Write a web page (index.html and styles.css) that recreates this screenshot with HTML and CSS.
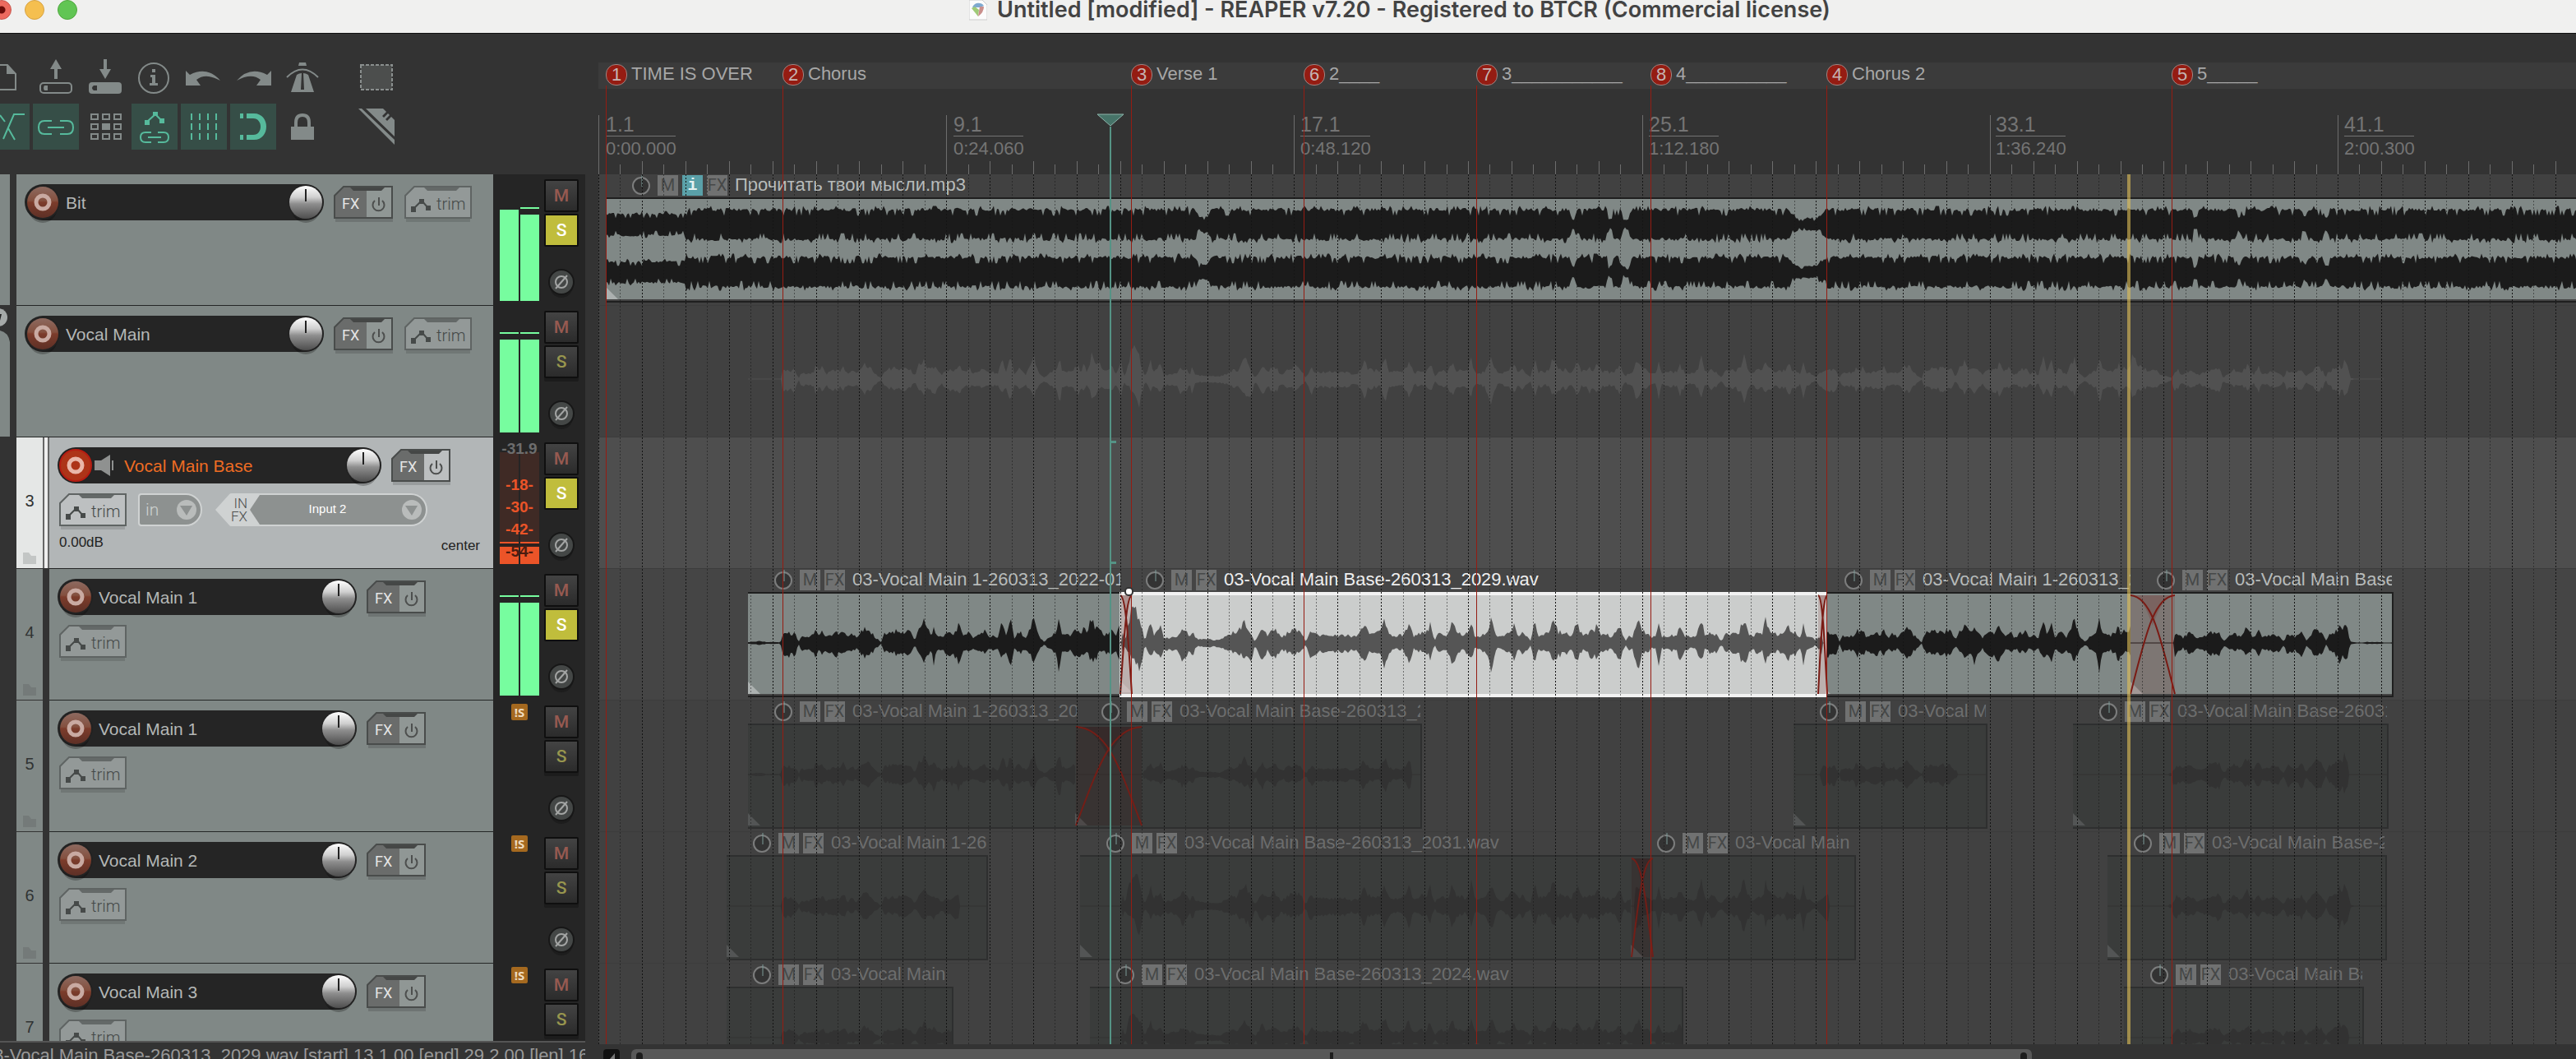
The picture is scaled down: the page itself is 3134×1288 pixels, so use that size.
FILE: index.html
```html
<!DOCTYPE html>
<html lang="en">
<head>
<meta charset="utf-8">
<title>Untitled [modified] - REAPER</title>
<link rel="stylesheet" href="styles.css">
</head>
<body>
<svg class="defs" aria-hidden="true">
  <defs>
    <linearGradient id="g-knob" x1="0" y1="0" x2="0" y2="1"><stop offset="0" stop-color="#fff"/><stop offset=".35" stop-color="#cfcfcf"/><stop offset=".55" stop-color="#8e8e8e"/><stop offset="1" stop-color="#4e4e4e"/></linearGradient>
    <linearGradient id="g-rec" x1="0" y1="0" x2="0" y2="1"><stop offset="0" stop-color="#8d6a60"/><stop offset=".45" stop-color="#84503f"/><stop offset=".5" stop-color="#7c3c2b"/><stop offset="1" stop-color="#5d3026"/></linearGradient>
    <symbol id="rec" viewBox="0 0 44 48"><ellipse cx="22" cy="28" rx="18" ry="19" fill="#000" opacity=".25"/><circle cx="22" cy="22" r="21" fill="#222"/><circle cx="22" cy="22" r="19" fill="url(#g-rec)"/><circle cx="22" cy="22" r="8" fill="none" stroke="#c9aaa2" stroke-width="5"/></symbol>
    <symbol id="rec-on" viewBox="0 0 44 48"><circle cx="22" cy="22" r="21" fill="#222"/><circle cx="22" cy="22" r="19" fill="#ad3418" stroke="#b51c12" stroke-width="2"/><circle cx="22" cy="22" r="8" fill="none" stroke="#e9b7a9" stroke-width="5"/></symbol>
    <symbol id="knob" viewBox="0 0 44 48"><ellipse cx="22" cy="28" rx="18" ry="19" fill="#000" opacity=".25"/><circle cx="22" cy="22" r="21.500" fill="#222"/><circle cx="22" cy="22" r="20" fill="url(#g-knob)"/><path d="M22 6v15" stroke="#222" stroke-width="2"/></symbol>
    <symbol id="fx-bg" viewBox="0 0 72 44"><path d="M2 40h70v4H2z" fill="#000" opacity=".14"/><path d="M12 1h59v38H1V12z" fill="#fff" opacity=".13"/><path d="M12 1h28v38H1V12z" fill="#6a6c6b"/><path d="M12 1h59v38H1V12z" fill="none" stroke="#494c4b" stroke-width="2"/><path d="M20 2h42l-4 4H24z" fill="#454746"/><path d="M50 18a7 7 0 1 0 9 0M55 14v10" fill="none" stroke="#4d4f4e" stroke-width="2"/></symbol>
    <symbol id="trim-bg" viewBox="0 0 82 44"><path d="M2 40h78v4H2z" fill="#000" opacity=".12"/><path d="M12 1h69v38H1V12z" fill="#fff" fill-opacity=".15" stroke="#5f6463" stroke-width="2"/><path d="M24 2h43l-4 4H28z" fill="#646968"/><path d="M11 28l10-10 8 9" fill="none" stroke="#464a49" stroke-width="2"/><path d="M8 25h6v7H8zM18 16h6v6h-6zM26 24h6v6h-6z" fill="#464a49"/></symbol>
    <symbol id="phase" viewBox="0 0 32 38"><circle cx="16" cy="21" r="14" fill="#1d1d1d"/><circle cx="16" cy="16" r="15" fill="#444746" stroke="#171717" stroke-width="2"/><circle cx="16" cy="16" r="7" fill="none" stroke="#a3a5a4" stroke-width="2"/><path d="M9 24L23 8" stroke="#a3a5a4" stroke-width="2"/></symbol>
    <symbol id="folder" viewBox="0 0 16 14"><path d="M0 0h7l3 4h6v10H0z"/></symbol>
    <symbol id="dial" viewBox="0 0 24 26"><circle cx="12" cy="13" r="10" fill="#333" stroke="currentColor" stroke-width="2"/><path d="M13 0v14" stroke="#7d9b98" stroke-width="1"/></symbol>
    <symbol id="drop" viewBox="0 0 24 24"><circle cx="12" cy="12" r="12" fill="#b9bcbb"/><path d="M4 7h15l-7 12z" fill="#8d9190"/></symbol>
  </defs>
</svg>

<div class="window">
  <header class="titlebar">
    <div class="lights"><button class="light red" aria-label="Close"></button><button class="light yellow" aria-label="Minimise"></button><button class="light green" aria-label="Zoom"></button></div>
    <svg class="docicon" viewBox="0 0 22 26"><path d="M0 0h16l6 6v18H0z" fill="#fcfcfc" stroke="#ccc"/><path d="M4 9a8 8 0 0 1 14-2l-5 2z" fill="#7fa9cf"/><path d="M3 10l8 10 1-8-5-4z" fill="#9fca78"/><path d="M13 8l5 0q0 7-7 12z" fill="#c98f8c"/></svg>
    <h1 class="title">Untitled [modified] - REAPER v7.20 - Registered to BTCR (Commercial license)</h1>
  </header>

  <main class="main">
    <section class="side">
      <nav class="toolbar" aria-label="Main toolbar">
        <div class="tools">
          <button class="tool" aria-label="New project"><svg viewBox="0 0 56 56"><path d="M6 13h23l10 11v19H6z" class="ln"/><path d="M28 12v12h12z"/></svg></button>
          <button class="tool" aria-label="Open project"><svg viewBox="0 0 56 56"><path d="M28 6l7 12h-5v12h-4V18h-5z"/><rect x="9" y="35" width="38" height="12" rx="4" class="ln"/><path d="M14 38h4v6h-4q-2-3 0-6z"/></svg></button>
          <button class="tool" aria-label="Save project"><svg viewBox="0 0 56 56"><path d="M26 6h4v12h5l-7 12-7-12h5z"/><path fill-rule="evenodd" d="M12 34h32q4 0 4 4v6q0 4-4 4H12q-4 0-4-4v-6q0-4 4-4zm2 4q-4 3 0 6h4v-6z"/></svg></button>
          <button class="tool" aria-label="Project settings"><svg viewBox="0 0 56 56"><circle cx="27" cy="29" r="18" class="ln"/><path d="M25 18h4v4h-4zM23 25h6v10h3v3H22v-3h3v-7h-2z"/></svg></button>
          <button class="tool" aria-label="Undo"><svg viewBox="0 0 56 56"><path d="M6 20l5 5Q32 14 48 32 30 22 19 31l5 7H6z"/></svg></button>
          <button class="tool" aria-label="Redo"><svg viewBox="0 0 56 56"><path d="M50 20l-5 5Q24 14 8 32q18-10 29-1l-5 7h18z"/></svg></button>
          <button class="tool" aria-label="Metronome"><svg viewBox="0 0 56 56"><path d="M24 10h8l1 4H23zM21 25q3-2 6-2l-1 20h4l-1-20q3 0 6 2l7 21H14z"/><path d="M9 28q19-19 38 0" class="ln"/></svg></button>
          <button class="tool spaced" aria-label="Marquee selection"><svg viewBox="0 0 56 56"><path d="M9 13h38v30H9z" fill="#4c4e4d" stroke="#8a8f8e" stroke-width="2" stroke-dasharray="4 2"/></svg></button>
        </div>
        <div class="tools">
          <button class="tool on" aria-label="Auto-crossfade"><svg viewBox="0 0 56 56"><path d="M24 43l13-30h13M20 14l6 8M30 30l8 14" class="ln"/></svg></button>
          <button class="tool on" aria-label="Item grouping"><svg viewBox="0 0 56 56"><path d="M23 21H14q-7 0-7 8t7 8h9M33 21h9q7 0 7 8t-7 8h-9M18 29h20" class="ln"/></svg></button>
          <button class="tool" aria-label="Ripple editing"><svg viewBox="0 0 56 56"><path d="M11 13h8v6h-8zM25 13h8v6h-8zM39 13h8v6h-8zM11 25h8v6h-8zM39 25h8v6h-8zM11 37h8v6h-8zM25 37h8v6h-8zM39 37h8v6h-8z" class="ln"/><path d="M24 24h10v8H24z"/></svg></button>
          <button class="tool on" aria-label="Envelope grouping"><svg viewBox="0 0 56 56"><path d="M16 20h6v6h-6zM26 10h6v5h-6zM34 18h6v6h-6z"/><path d="M19 22l10-9 8 8M24 35h-7q-6 0-6 6t6 6h7M32 35h7q6 0 6 6t-6 6h-7M20 41h16" class="ln"/></svg></button>
          <button class="tool on" aria-label="Grid"><svg viewBox="0 0 56 56"><path d="M13 12v32M23 12v32M33 12v32M43 12v32" stroke-dasharray="8 4" class="ln"/></svg></button>
          <button class="tool on" aria-label="Snap"><svg viewBox="0 0 56 56"><path d="M12 12h4v6h-4zM12 38h4v6h-4zM20 12h9c20 0 20 32 0 32h-9v-6h8c12 0 12-20 0-20h-8z"/></svg></button>
          <button class="tool" aria-label="Lock"><svg viewBox="0 0 56 56"><path d="M14 28h28v16H14z"/><path d="M20 30v-7q0-9 8-9t8 9v7" fill="none" stroke="currentColor" stroke-width="4"/></svg></button>
          <button class="tool spaced" aria-label="Razor edit"><svg viewBox="0 0 56 56"><path d="M6 6h4l40 38v6zM15 6h21l4 4-5 5 2 2 5-5 2 2-5 5 2 2 5-5 4 4v20z"/></svg></button>
        </div>
      </nav>

      <div class="tracks">
        <article class="track">
          <div class="indent body"></div>
          <div class="panel wide">
            <div class="row"><div class="namebar"><button class="round" aria-label="Record arm"><svg><use href="#rec"/></svg></button><span class="name">Bit</span><button class="round" aria-label="Volume"><svg><use href="#knob"/></svg></button></div>
            <button class="fx"><svg><use href="#fx-bg"/></svg><span>FX</span></button><button class="trim"><svg><use href="#trim-bg"/></svg><span>trim</span></button></div>
          </div>
          <div class="strip"><div class="meters"><i class="m1"></i><i class="m2 peak"></i></div>
            <div class="ms"><button class="mute">M</button><button class="solo lit">S</button><button class="phase" aria-label="Phase"><svg><use href="#phase"/></svg></button></div></div>
        </article>
        <article class="track">
          <div class="indent body parent"><svg viewBox="0 0 12 159"><path d="M0 0h12v159H0z" fill="#333"/><path d="M0 30q10 2 12 14v115H0z" fill="#808886"/><circle cx="-2" cy="14" r="11" fill="#a5a9a8"/><path d="M0 10h2l-2 8z" fill="#222"/></svg></div>
          <div class="panel wide">
            <div class="row"><div class="namebar"><button class="round" aria-label="Record arm"><svg><use href="#rec"/></svg></button><span class="name">Vocal Main</span><button class="round" aria-label="Volume"><svg><use href="#knob"/></svg></button></div>
            <button class="fx"><svg><use href="#fx-bg"/></svg><span>FX</span></button><button class="trim"><svg><use href="#trim-bg"/></svg><span>trim</span></button></div>
          </div>
          <div class="strip"><div class="meters"><i class="m3 peak"></i><i class="m3 peak"></i></div>
            <div class="ms"><button class="mute">M</button><button class="solo">S</button><button class="phase" aria-label="Phase"><svg><use href="#phase"/></svg></button></div></div>
        </article>
        <article class="track selected">
          <div class="indent"></div>
          <div class="num"><span>3</span><svg><use href="#folder"/></svg></div>
          <div class="panel">
            <div class="row"><div class="namebar long"><button class="round" aria-label="Record arm"><svg><use href="#rec-on"/></svg></button><svg class="speaker" viewBox="0 0 24 26"><path d="M0 7h8l11-7v26L8 19H0z" fill="#8f9190"/><path d="M22 7v12" stroke="#8f9190" stroke-width="2"/></svg><span class="name">Vocal Main Base</span><button class="round" aria-label="Volume"><svg><use href="#knob"/></svg></button></div>
            <button class="fx"><svg><use href="#fx-bg"/></svg><span>FX</span></button></div>
            <div class="row second"><button class="trim"><svg><use href="#trim-bg"/></svg><span>trim</span></button>
              <button class="inmode"><span>in</span><svg><use href="#drop"/></svg></button>
              <div class="input"><button class="infx">IN<br>FX</button><button class="source"><span>Input 2</span><svg><use href="#drop"/></svg></button></div></div>
            <div class="row values"><span>0.00dB</span><span class="pan">center</span></div>
          </div>
          <div class="strip"><div class="meters armed"><i></i><i></i><div class="scale"><b class="max">-31.9</b><b>-18-</b><b>-30-</b><b>-42-</b><b class="low">-54-</b></div></div>
            <div class="ms"><button class="mute">M</button><button class="solo lit">S</button><button class="phase" aria-label="Phase"><svg><use href="#phase"/></svg></button></div></div>
        </article>
        <article class="track">
          <div class="indent"></div>
          <div class="num"><span>4</span><svg><use href="#folder"/></svg></div>
          <div class="panel">
            <div class="row"><div class="namebar"><button class="round" aria-label="Record arm"><svg><use href="#rec"/></svg></button><span class="name">Vocal Main 1</span><button class="round" aria-label="Volume"><svg><use href="#knob"/></svg></button></div>
            <button class="fx"><svg><use href="#fx-bg"/></svg><span>FX</span></button></div>
            <div class="row second"><button class="trim"><svg><use href="#trim-bg"/></svg><span>trim</span></button></div>
          </div>
          <div class="strip"><div class="meters"><i class="m3 peak"></i><i class="m3 peak"></i></div>
            <div class="ms"><button class="mute">M</button><button class="solo lit">S</button><button class="phase" aria-label="Phase"><svg><use href="#phase"/></svg></button></div></div>
        </article>
        <article class="track">
          <div class="indent"></div>
          <div class="num"><span>5</span><svg><use href="#folder"/></svg></div>
          <div class="panel">
            <div class="row"><div class="namebar"><button class="round" aria-label="Record arm"><svg><use href="#rec"/></svg></button><span class="name">Vocal Main 1</span><button class="round" aria-label="Volume"><svg><use href="#knob"/></svg></button></div>
            <button class="fx"><svg><use href="#fx-bg"/></svg><span>FX</span></button></div>
            <div class="row second"><button class="trim"><svg><use href="#trim-bg"/></svg><span>trim</span></button></div>
          </div>
          <div class="strip"><div class="meters"><b class="notsolo">!S</b></div>
            <div class="ms"><button class="mute">M</button><button class="solo">S</button><button class="phase" aria-label="Phase"><svg><use href="#phase"/></svg></button></div></div>
        </article>
        <article class="track">
          <div class="indent"></div>
          <div class="num"><span>6</span><svg><use href="#folder"/></svg></div>
          <div class="panel">
            <div class="row"><div class="namebar"><button class="round" aria-label="Record arm"><svg><use href="#rec"/></svg></button><span class="name">Vocal Main 2</span><button class="round" aria-label="Volume"><svg><use href="#knob"/></svg></button></div>
            <button class="fx"><svg><use href="#fx-bg"/></svg><span>FX</span></button></div>
            <div class="row second"><button class="trim"><svg><use href="#trim-bg"/></svg><span>trim</span></button></div>
          </div>
          <div class="strip"><div class="meters"><b class="notsolo">!S</b></div>
            <div class="ms"><button class="mute">M</button><button class="solo">S</button><button class="phase" aria-label="Phase"><svg><use href="#phase"/></svg></button></div></div>
        </article>
        <article class="track">
          <div class="indent"></div>
          <div class="num"><span>7</span><svg><use href="#folder"/></svg></div>
          <div class="panel">
            <div class="row"><div class="namebar"><button class="round" aria-label="Record arm"><svg><use href="#rec"/></svg></button><span class="name">Vocal Main 3</span><button class="round" aria-label="Volume"><svg><use href="#knob"/></svg></button></div>
            <button class="fx"><svg><use href="#fx-bg"/></svg><span>FX</span></button></div>
            <div class="row second"><button class="trim"><svg><use href="#trim-bg"/></svg><span>trim</span></button></div>
          </div>
          <div class="strip"><div class="meters"><b class="notsolo">!S</b></div>
            <div class="ms"><button class="mute">M</button><button class="solo">S</button><button class="phase" aria-label="Phase"><svg><use href="#phase"/></svg></button></div></div>
        </article>
      </div>
      <footer class="status"><span>03-Vocal Main Base-260313_2029.wav [start] 13.1.00 [end] 29.2.00 [len] 16</span></footer>
    </section>

    <section class="arrange">
      <div class="ruler">
        <svg class="ticks" id="ticks"></svg>
        <div class="time" style="left:9px"><span>1.1</span><span>0:00.000</span></div>
        <div class="time" style="left:432px"><span>9.1</span><span>0:24.060</span></div>
        <div class="time" style="left:854px"><span>17.1</span><span>0:48.120</span></div>
        <div class="time" style="left:1278px"><span>25.1</span><span>1:12.180</span></div>
        <div class="time" style="left:1700px"><span>33.1</span><span>1:36.240</span></div>
        <div class="time" style="left:2124px"><span>41.1</span><span>2:00.300</span></div>
      </div>
      <div class="lanes">
        <div class="lane">
          <article class="item" style="left:9px;right:-40px"><header><svg class="dial"><use href="#dial"/></svg><button>M</button><button class="info">i</button><button>FX</button><span>Прочитать твои мысли.mp3</span></header><div class="clip"><svg class="wave" data-kind="music"></svg></div></article>
        </div>
        <div class="lane"><svg class="wave ghost" data-voice="952-2862" data-scale=".9"></svg></div>
        <div class="lane sel"></div>
        <div class="lane live">
          <article class="item" style="left:182px;width:467px"><header style="width:453px"><svg class="dial"><use href="#dial"/></svg><button>M</button><button>FX</button><span>03-Vocal Main 1-260313_2022-01</span></header><div class="clip"><svg class="wave" data-voice="910-1377"></svg></div></article>
          <article class="item current" style="left:634px;width:861px"><header><svg class="dial"><use href="#dial"/></svg><button>M</button><button>FX</button><span>03-Vocal Main Base-260313_2029.wav</span></header><div class="clip"><svg class="wave" data-voice="1366-2216"></svg></div></article>
          <article class="item" style="left:1484px;width:434px"><header style="width:380px"><svg class="dial"><use href="#dial"/></svg><button>M</button><button>FX</button><span>03-Vocal Main 1-260313_2</span></header><div class="clip"><svg class="wave" data-voice="2214-2646"></svg></div></article>
          <article class="item" style="left:1864px;width:320px"><header style="width:318px"><svg class="dial"><use href="#dial"/></svg><button>M</button><button>FX</button><span>03-Vocal Main Base</span></header><div class="clip"><svg class="wave" data-voice="2646-2912"></svg></div></article>
          <svg class="fade" style="left:635px;width:14px" viewBox="0 0 54 120" preserveAspectRatio="none"><use href="#xfade"/></svg>
          <svg class="fade" style="left:1484px;width:11px" viewBox="0 0 54 120" preserveAspectRatio="none"><use href="#xfade"/></svg>
          <svg class="fade" style="left:1864px;width:54px" viewBox="0 0 54 120" preserveAspectRatio="none"><g id="xfade"><path d="M0 0h54v120H0z" fill="currentColor" fill-opacity=".16"/><path d="M0 0h54C40 2 34 18 27 37 20 18 14 2 0 0z" fill="currentColor" fill-opacity=".2"/><path d="M0 0C26 2 36 50 54 120M54 0C28 2 18 50 0 120" fill="none" vector-effect="non-scaling-stroke"/></g></svg>
        </div>
        <div class="lane">
          <article class="item muted" style="left:182px;width:479px"><header style="width:400px"><svg class="dial"><use href="#dial"/></svg><button>M</button><button>FX</button><span>03-Vocal Main 1-260313_20</span></header><div class="clip"><svg class="wave" data-voice="910-1389" data-scale=".8"></svg></div></article>
          <article class="item muted" style="left:580px;width:422px"><header style="width:420px"><svg class="dial"><use href="#dial"/></svg><button>M</button><button>FX</button><span>03-Vocal Main Base-260313_2</span></header><div class="clip"><svg class="wave" data-voice="1392-1716" data-scale=".7"></svg></div></article>
          <article class="item muted" style="left:1454px;width:236px"><header style="width:234px"><svg class="dial"><use href="#dial"/></svg><button>M</button><button>FX</button><span>03-Vocal M</span></header><div class="clip"><svg class="wave" data-voice="2216-2380" data-scale=".8"></svg></div></article>
          <article class="item muted" style="left:1794px;width:384px"><header style="width:382px"><svg class="dial"><use href="#dial"/></svg><button>M</button><button>FX</button><span>03-Vocal Main Base-26031</span></header><div class="clip"><svg class="wave" data-voice="2640-2856"></svg></div></article>
          <svg class="fade dim" style="left:581px;width:80px" viewBox="0 0 54 120" preserveAspectRatio="none"><use href="#xfade"/></svg>
        </div>
        <div class="lane">
          <article class="item muted" style="left:156px;width:318px"><header style="width:316px"><svg class="dial"><use href="#dial"/></svg><button>M</button><button>FX</button><span>03-Vocal Main 1-26</span></header><div class="clip"><svg class="wave" data-voice="952-1166" data-scale=".8"></svg></div></article>
          <article class="item muted" style="left:586px;width:697px"><header style="width:660px"><svg class="dial"><use href="#dial"/></svg><button>M</button><button>FX</button><span>03-Vocal Main Base-260313_2031.wav</span></header><div class="clip"><svg class="wave" data-voice="1366-2011"></svg></div></article>
          <article class="item muted" style="left:1256px;width:274px"><header style="width:271px"><svg class="dial"><use href="#dial"/></svg><button>M</button><button>FX</button><span>03-Vocal Main</span></header><div class="clip"><svg class="wave" data-voice="1990-2224"></svg></div></article>
          <article class="item muted" style="left:1836px;width:340px"><header style="width:337px"><svg class="dial"><use href="#dial"/></svg><button>M</button><button>FX</button><span>03-Vocal Main Base-2</span></header><div class="clip"><svg class="wave" data-voice="2640-2862"></svg></div></article>
          <svg class="fade dim" style="left:1257px;width:26px" viewBox="0 0 54 120" preserveAspectRatio="none"><use href="#xfade"/></svg>
        </div>
        <div class="lane">
          <article class="item muted" style="left:156px;width:276px"><header style="width:272px"><svg class="dial"><use href="#dial"/></svg><button>M</button><button>FX</button><span>03-Vocal Main</span></header><div class="clip"><svg class="wave" data-voice="952-1160" data-scale=".7"></svg></div></article>
          <article class="item muted" style="left:598px;width:722px"><header><svg class="dial"><use href="#dial"/></svg><button>M</button><button>FX</button><span>03-Vocal Main Base-260313_2024.wav</span></header><div class="clip"><svg class="wave" data-voice="1366-2048" data-scale=".8"></svg></div></article>
          <article class="item muted" style="left:1856px;width:292px"><header style="width:290px"><svg class="dial"><use href="#dial"/></svg><button>M</button><button>FX</button><span>03-Vocal Main Ba</span></header><div class="clip"><svg class="wave" data-voice="2642-2856" data-scale=".8"></svg></div></article>
        </div>
        <svg class="grid" id="grid"></svg>
      </div>
      <div class="hscroll"><svg class="arrow" viewBox="0 0 20 12"><path d="M0 12V4q0-4 4-4h12q4 0 4 4v8z" fill="#111"/><path d="M14 5v7H8z" fill="#777"/></svg><div class="thumb"><i></i><i class="mid"></i><i></i></div></div>

      <div class="markers">
        <a href="#" class="marker" style="left:9px"><b>1</b><span>TIME IS OVER</span></a>
        <a href="#" class="marker" style="left:224px"><b>2</b><span>Chorus</span></a>
        <a href="#" class="marker" style="left:648px"><b>3</b><span>Verse 1</span></a>
        <a href="#" class="marker" style="left:858px"><b>6</b><span>2____</span></a>
        <a href="#" class="marker" style="left:1068px"><b>7</b><span>3___________</span></a>
        <a href="#" class="marker" style="left:1280px"><b>8</b><span>4__________</span></a>
        <a href="#" class="marker" style="left:1494px"><b>4</b><span>Chorus 2</span></a>
        <a href="#" class="marker" style="left:1914px"><b>5</b><span>5_____</span></a>
        <div class="playcursor"><svg viewBox="0 0 34 16"><path d="M1 1h32L17 15z" fill="#467368" stroke="#8db5ab"/></svg></div>
        <div class="bracket"></div>
        <div class="editcursor"></div>
        <div class="handle"></div>
      </div>
    </section>
  </main>
</div>
<script src="waves.js"></script>
</body>
</html>
```
FILE: styles.css
```css
* { box-sizing: border-box; }
body { margin: 0; background: #333; font-family: "Liberation Sans", Arial, sans-serif; overflow: hidden; }
button { appearance: none; border: 0; padding: 0; margin: 0; background: none; font: inherit; color: inherit; }
svg { display: block; }
.defs { position: absolute; width: 0; height: 0; }

.window { display: flex; flex-direction: column; height: 100vh; }
.titlebar { display: flex; justify-content: center; align-items: flex-start; gap: 12px; height: 41px; background: #f0f0ef; border-bottom: 1px solid #111; position: relative; overflow: hidden; flex: none; }
.lights { position: absolute; left: -10px; top: 0; display: flex; gap: 16px; }
.light { width: 24px; height: 24px; border-radius: 50%; border: 1px solid; }
.light.red { background: radial-gradient(circle, #6b0d0a 4px, #ed6a5f 5px); border-color: #c9534a; }
.light.yellow { background: #f5bf4f; border-color: #d6a243; }
.light.green { background: #61c554; border-color: #50a73f; }
.docicon { width: 22px; height: 26px; margin-left: 272px; }
.title { margin: 0; font: 600 27px/24px Inter, sans-serif; color: #434343; white-space: nowrap; height: 32px; }

.main { display: flex; flex: 1; min-height: 0; }
.side { width: 728px; flex: none; display: flex; flex-direction: column; overflow: hidden; }
.toolbar { height: 171px; flex: none; padding-top: 25px; display: flex; flex-direction: column; gap: 4px; }
.tools { display: flex; gap: 4px; margin-left: -20px; }
.tool { width: 56px; height: 56px; color: #838a89; flex: none; }
.tool.on { background: #364e47; color: #56ba9c; }
.tool.spaced { margin-left: 30px; }
.tool svg { width: 56px; height: 56px; fill: currentColor; }
.tool .ln { fill: none; stroke: currentColor; stroke-width: 2; }

.tracks { flex: 1; min-height: 0; overflow: hidden; display: flex; flex-direction: column; }
.track { height: 160px; flex: none; display: flex; padding-right: 16px; }
.indent { width: 12px; height: 159px; margin-right: 8px; }
.indent.body { background: #808886; }
.indent svg { width: 12px; height: 159px; }
.num { width: 32px; height: 159px; margin-right: 8px; background: #808886; color: #303333; font-size: 20px; display: flex; flex-direction: column; justify-content: flex-end; align-items: center; padding-bottom: 5px; gap: 51px; }
.num svg { width: 16px; height: 14px; fill: #747a79; }
.panel { flex: 1; height: 160px; background: #808886; border-bottom: 1px solid #242626; padding: 12px 10px 0; }
.selected .num { background: #e5e7e6; box-shadow: 2px 0 #666, 6px 0 #eee, 8px 0 #666; }
.selected .num svg { fill: #c3c6c5; }
.selected .panel { background: #b2b6b7; }
.row { display: flex; height: 44px; }
.row.second { margin-left: 2px; margin-top: 12px; }
.namebar { width: 364px; height: 44px; border-radius: 22px; background: #252525; display: flex; align-items: flex-start; margin-right: 12px; }
.namebar.long { width: 394px; }
.round, .round svg { width: 44px; height: 48px; flex: none; }
.name { flex: 1; font-size: 21px; line-height: 45px; color: #b4b7b6; padding-left: 6px; white-space: nowrap; }
.selected .name { color: #ee6c23; padding-left: 12px; }
.speaker { width: 24px; height: 26px; margin-top: 9px; margin-left: 1px; }
.fx, .trim { position: relative; height: 44px; margin-top: 2px; text-align: left; flex: none; }
.fx { width: 72px; margin-right: 14px; }
.trim { width: 82px; }
.second .trim { margin-top: 0; }
.fx svg, .trim svg { position: absolute; inset: 0; width: 100%; height: 44px; }
.fx span, .trim span { position: relative; display: block; line-height: 40px; height: 44px; padding-top: 2px; }
.fx span { font-family: Roboto, sans-serif; font-size: 18px; color: #e4e4e4; padding-left: 10px; }
.trim span { font-family: Roboto, sans-serif; font-weight: 300; font-size: 20px; color: #454948; padding-left: 39px; }
.inmode { width: 78px; height: 40px; margin-left: 14px; border: 2px solid #cfd2d2; border-radius: 4px 20px 20px 4px; background: #8d9190; display: flex; align-items: center; justify-content: space-between; padding: 0 5px 0 7px; font: 300 21px Roboto, sans-serif; color: #cdd1d1; }
.inmode svg, .source svg { width: 24px; height: 24px; }
.input { display: flex; width: 258px; height: 40px; margin-left: 16px; border-radius: 20px; background: #cfd2d2; clip-path: polygon(0 50%, 7% 0, 100% 0, 100% 100%, 7% 100%); }
.infx { width: 44px; font: 300 17px/16px Roboto, sans-serif; color: #4d4f4f; text-align: right; padding-right: 5px; }
.source { flex: 1; height: 36px; margin: 2px 2px 2px -2px; border-radius: 0 18px 18px 0; background: #8d9190; clip-path: polygon(0 50%, 12px 0, 100% 0, 100% 100%, 12px 100%); display: flex; align-items: center; justify-content: flex-end; padding-right: 5px; color: #fff; font-size: 15px; }
.source span { flex: 1; text-align: center; padding-left: 4px; padding-bottom: 3px; }
.values { margin-top: 2px; margin-left: 2px; padding-right: 6px; height: 32px; justify-content: space-between; font-size: 17px; line-height: 27px; color: #222; }
.values .pan { padding-top: 4px; }

.strip { width: 112px; height: 160px; background: #252525; display: flex; padding: 6px 8px 0; }
.meters { width: 48px; height: 148px; margin-right: 6px; display: flex; gap: 2px; align-items: flex-end; justify-content: center; position: relative; }
.meters i { flex: 1; background: #77fd9f; position: relative; }
.meters .m1 { height: 111px; }
.meters .m2 { height: 105px; }
.meters .m3 { height: 113px; }
.meters .peak::before { content: ""; position: absolute; left: 0; right: 0; top: -9px; height: 2px; background: #77fd9f; }
.meters.armed i { height: 136px; background: linear-gradient(#3f2a25 109px, #eb5428 109px, #eb5428 111px, #2c211f 111px, #2c211f 115px, #eb5428 115px); }
.scale { position: absolute; inset: -2px -4px 0; display: flex; flex-direction: column; text-align: center; font-size: 19px; line-height: 20px; color: #eb5428; gap: 7px; }
.scale .max { color: #6d6d6d; margin-bottom: 17px; }
.scale .low { color: #4c1c10; }
.notsolo { align-self: flex-start; margin-top: -2px; width: 20px; height: 20px; background: #a5691f; border-radius: 2px; font: 700 15px/20px "Open Sans", sans-serif; color: #efdcc0; text-align: center; }
.ms { width: 42px; display: flex; flex-direction: column; align-items: center; gap: 2px; font-family: Roboto, sans-serif; font-size: 21px; }
.mute, .solo { width: 42px; height: 40px; border: 2px solid #0f0f0f; background: linear-gradient(#434343, #2b2b2b); border-radius: 2px; flex: none; }
.mute { color: #975a51; font-weight: 500; }
.solo { color: #98964e; font-weight: 500; box-shadow: 0 4px #1c1c1c; }
.solo.lit { background: #c0bd3c; color: #fff; box-shadow: none; }
.phase { margin-top: 25px; }
.phase svg { width: 32px; height: 38px; }
.status { height: 22px; flex: none; border-top: 2px solid #555; color: #999; font-size: 22px; line-height: 32px; white-space: nowrap; overflow: hidden; margin-right: 16px; }
.status span { margin-left: -20px; }

.arrange { flex: 1; min-width: 0; position: relative; display: flex; flex-direction: column; overflow: hidden; }
.ruler { height: 171px; flex: none; position: relative; background: linear-gradient(#333 35px, #3b3b3b 35px, #3b3b3b 67px, #333 67px); }
.ticks { position: absolute; left: 0; bottom: 0; width: 100%; height: 72px; }
.ticks path { stroke: #6d6d6d; fill: none; }
.time { position: absolute; top: 97px; color: #747474; display: flex; flex-direction: column; width: 85px; white-space: nowrap; }
.time span:first-child { font-size: 25px; line-height: 27px; border-bottom: 1px solid #747474; }
.time span:last-child { font-size: 22px; line-height: 30px; }
.lanes { flex: 1; min-height: 0; position: relative; overflow: hidden; background: #404040; }
.lane { height: 160px; position: relative; border-bottom: 1px solid #3c3c3c; background: #414141; }
.lane.sel { background: #4e4e4e; }
.lane.live { background: #454545; }
.item { position: absolute; top: 0; height: 156px; }
.item.current { z-index: 1; }
.item header { height: 28px; padding: 1px 0 0 31px; display: flex; gap: 5px; overflow: hidden; white-space: nowrap; align-items: flex-start; color: #7c7d7d; position: relative; }
.dial { width: 24px; height: 26px; flex: none; margin-right: 3px; }
.item header button { width: 25px; height: 25px; flex: none; background: #707171; color: #464848; font: 20px/25px Roboto, sans-serif; text-align: center; }
.item header .info { background: #5aa0a8; color: #e4f2f2; font: 700 20px/25px "Liberation Mono", monospace; }
.item header span { font-size: 22px; line-height: 24px; color: #b7bbba; padding-left: 4px; }
.clip { position: relative; height: 128px; background: #808886; border: 2px solid #1f1f1f; border-left: 0; box-shadow: inset 0 -2px #444; overflow: hidden; }
.clip::after { content: ""; position: absolute; left: 0; bottom: 2px; width: 15px; height: 15px; background: rgba(255, 255, 255, .35); clip-path: polygon(0 0, 100% 100%, 0 100%); }
.wave { position: absolute; left: 0; top: 0; width: 100%; height: 122px; fill: #1b1b1b; }
.wave.ghost { left: 182px; top: 29px; width: 1990px; fill: #515151; }
.current .clip { background: #cbcdcc; border: 0 solid #f2f2f2; border-width: 4px 2px 4px 0; box-shadow: none; }
.current .wave { top: -2px; fill: #555; }
.current header span { color: #eee; }
.muted header span { color: #6c6d6d; }
.muted .clip { background: #3a3c3b; border-color: #2e2f2f; box-shadow: none; }
.muted .clip::after { background: #535555; }
.muted .wave { fill: #323232; }
.fade { position: absolute; top: 32px; height: 120px; overflow: visible; color: #6e1a14; stroke: none; z-index: 2; }
.fade path:last-child { stroke: #7a1b14; stroke-width: 2px; }
.fade.dim { color: #300505; opacity: .9; }
.grid { position: absolute; inset: 0; width: 100%; height: 100%; pointer-events: none; z-index: 3; }
.grid path { fill: none; stroke-dasharray: 2 2; }
.grid .bar { stroke: #141414; }
.grid .half { stroke: #141414; stroke-opacity: .5; }

.hscroll { height: 18px; flex: none; background: #333; display: flex; padding: 6px 0 0 6px; gap: 14px; }
.arrow { width: 20px; height: 12px; }
.thumb { width: 71%; height: 12px; background: #585858; border-radius: 6px 6px 0 0; display: flex; justify-content: space-between; align-items: flex-end; padding: 0 6px; }
.thumb i { width: 8px; height: 8px; background: #1d1d1d; border-radius: 4px 4px 0 0; }
.thumb .mid { width: 4px; border-radius: 0; }

.markers { position: absolute; inset: 0 0 18px; overflow: hidden; pointer-events: none; z-index: 4; }
.marker { position: absolute; top: 37px; bottom: 0; display: flex; align-items: flex-start; gap: 5px; text-decoration: none; font-size: 22px; line-height: 24px; color: #a7a7a7; white-space: nowrap; }
.marker::before { content: ""; position: absolute; left: 0; top: 26px; bottom: 0; width: 1px; background: #951c12; }
.marker b { width: 26px; height: 26px; border: 1px solid #9b8583; border-radius: 12px; background: #951c12; color: #c5b5b3; font-weight: 400; text-align: center; }
.playcursor { position: absolute; left: 606px; top: 97px; bottom: 0; width: 34px; }
.playcursor svg { width: 34px; height: 16px; }
.playcursor::after { content: ""; position: absolute; left: 16px; top: 16px; bottom: 0; width: 2px; background: #559385; }
.bracket { position: absolute; left: 622px; top: 495px; width: 8px; height: 150px; border: solid #559385; border-width: 3px 0; }
.editcursor { position: absolute; left: 1860px; top: 171px; bottom: 0; width: 4px; background: rgba(226, 194, 88, .6); }
.handle { position: absolute; left: 640px; top: 673px; width: 11px; height: 11px; border-radius: 5px; background: #fff; border: 2px solid #333; }
```
FILE: waves.js
```js
// Timeline origin in window pixels, and width of one bar
const ORIGIN = 728, BAR = 52.9;
let seed = 7;
const rnd = () => (seed = (seed * 16807) % 2147483647) / 2147483647;

// Envelope lists: x, height above, height below the centre line
const chorus = [66,3,3,90,8,8,100,6,6,110,2,2,120,4,4,143,2,2,150,38,50,178,38,50,190,5,5,195,25,30,225,28,30,232,52,58,240,35,30,248,52,50,258,22,30,285,40,50,292,30,30,302,55,50,312,20,25,322,35,30,335,22,22,355,62,60,370,45,45,382,20,22,396,3,3,404,38,35,428,45,40,452,45,50,468,45,40,481,10,10,492,65,45,497,45,40,504,97,78,510,50,40,522,40,40,528,55,78,535,40,40,548,20,22,565,38,45,580,35,50,592,70,72,600,30,35,608,35,30,617,48,35,627,20,25,657,50,40,668,20,20,678,35,35,688,15,20,702,88,60,710,30,40,722,90,85,730,20,25,740,48,40,760,20,30,768,50,40,780,95,72,790,30,30,805,5,8,820,25,25,835,40,40,843,92,112,850,40,40,870,30,30,885,50,50,890,65,72,897,30,50,905,60,40,912,35,30,925,100,72,935,55,70,942,80,40,955,30,35,965,40,45,975,55,45,985,20,25,997,80,75,1008,6,8];
const verse = [1010,15,20,1020,100,40,1032,138,60,1045,85,108,1058,8,8,1072,75,48,1080,30,30,1098,60,50,1106,15,25,1140,30,35,1152,50,68,1165,45,50,1170,15,20,1177,50,62,1185,18,15,1245,10,15,1255,18,20,1280,40,35,1290,35,35,1308,90,60,1325,30,70,1335,5,8,1352,60,75,1365,30,30,1384,55,60,1400,20,25,1432,55,45,1450,40,30,1462,5,8,1475,45,60,1490,30,35,1568,30,35];
const ending = [850,95,70,870,60,50,890,30,30,905,45,40,920,20,25,945,5,5,950,20,50,958,40,40,970,20,20,990,40,40,1000,25,30,1010,18,20,1045,45,50,1060,40,50,1068,5,10,1090,40,30,1110,25,25,1125,60,45,1140,20,20,1153,50,50,1160,20,20,1185,35,35,1200,30,40,1212,5,8,1220,35,45,1240,25,30,1256,40,50,1265,10,12,1290,55,50,1303,40,45,1313,8,5,1320,35,30,1340,45,50,1346,75,90,1350,40,40,1357,75,65,1364,50,50,1372,5,5,1385,2,2,1405,2,2,1410,4,4,1445,4,4,1448,1,1,1470,1,1];

const voice = [];
const add = (list, scale, dx, limit = 9999) => {
  for (let i = 0; i < list.length; i += 3) {
    const x = list[i] / scale + dx;
    if (x < limit) voice.push([x, list[i + 1] / 3, list[i + 2] / 3]);
  }
};
add(chorus, 2.063, 880);
add(verse, 2.063, 880);
for (let x = 1644, n = 0; x < 2212; n++) {
  const spike = n % 5 === 3, rest = n % 23 === 19;
  const up = rest ? 3 : spike ? 18 + rnd() * 14 : 7 + rnd() * 8;
  voice.push([x, up, up * (.75 + rnd() * .45)]);
  x += 3 + rnd() * 4;
}
add(chorus.slice(18), 2.063, 2146, 2592);
add(ending, 1.96, 2160);

function at(x) {
  let i = voice.findIndex(p => p[0] > x);
  if (i < 1) return [1, 1];
  const a = voice[i - 1], b = voice[i], t = (x - a[0]) / (b[0] - a[0]);
  return [a[1] + (b[1] - a[1]) * t, a[2] + (b[2] - a[2]) * t];
}

function shape(mid, x0, x1, fn) {
  let top = '', low = [];
  for (let x = x0; x <= x1; x += 2) {
    const [u, d] = fn(x);
    top += `L${x - x0} ${(mid - u).toFixed(1)}`;
    low.push(`L${x - x0} ${(mid + d).toFixed(1)}`);
  }
  return 'M' + top.slice(1) + low.reverse().join('') + 'Z';
}

const dips = [[1464, 5, 9], [1914, 2, 12], [1959, 2, 11], [1978, 3, 12], [2198, 12, 11], [2671, 2, 9], [2724, 2, 10], [2804, 2, 9], [2830, 2, 10]];
function music(x) {
  let a = x < 835 ? 13 : 18;
  for (const [c, w, depth] of dips) {
    const d = Math.abs(x - c);
    if (d < w * 2) a -= depth * Math.min(1, 2 - d / w);
  }
  const j = () => { const r = rnd(); return r > .92 ? a * .25 : r < .12 ? -a * .4 : (r - .5) * a * .3; };
  return [Math.max(3, a + j()), Math.max(3, a + j())];
}

document.querySelectorAll('.wave').forEach(svg => {
  const box = svg.getBoundingClientRect();
  const x0 = Math.round(box.left), x1 = x0 + Math.round(box.width);
  let d;
  if (svg.dataset.kind === 'music') {
    d = shape(31, x0, x1, music) + shape(89, x0, x1, music);
  } else {
    const [from, to] = svg.dataset.voice.split('-').map(Number);
    const k = Number(svg.dataset.scale || 1);
    d = shape(60, x0, x1, x => {
      if (x < from || x > to) return [.6, .6];
      const [u, l] = at(x), j = .72 + rnd() * .43;
      return [Math.max(.6, u * j * k), Math.max(.6, l * j * k)];
    });
  }
  svg.innerHTML = `<path d="${d}"/>`;
});

const width = window.innerWidth - ORIGIN;
let ticks = '', bars = '', halves = '';
for (let n = 0; n * BAR / 2 < width; n++) {
  const x = Math.round(n * BAR / 2) + .5;
  ticks += `M${x} ${n % 16 === 0 ? 0 : n % 2 ? 60 : 56}V72`;
  if (n % 2) halves += `M${x} 0V1100`; else bars += `M${x} 0V1100`;
}
document.getElementById('ticks').innerHTML = `<path d="${ticks}"/>`;
document.getElementById('grid').innerHTML = `<path class="bar" d="${bars}"/><path class="half" d="${halves}"/>`;
```
